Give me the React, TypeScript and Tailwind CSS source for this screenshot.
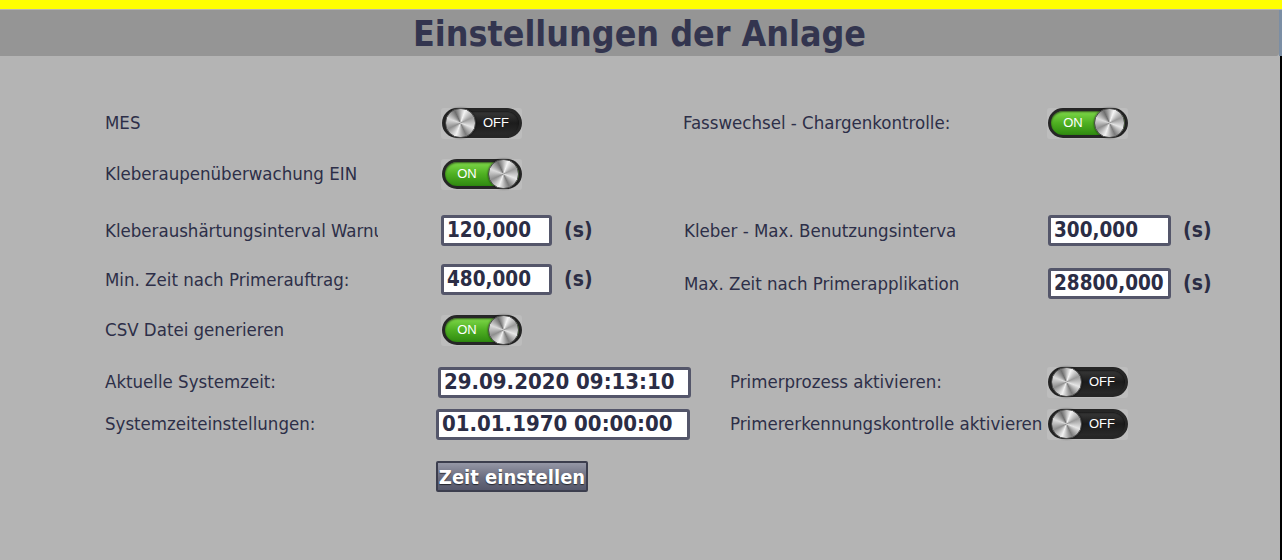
import React from 'react'

const font = { fontFamily: '"DejaVu Sans Condensed", "DejaVu Sans", sans-serif', fontStretch: 'condensed' as const }

function Toggle({ on }: { on: boolean }) {
  return (
    <div className="w-[81px] h-[31px] bg-[#bdbdbd] rounded-[3px] flex items-center justify-center shrink-0">
      <div
        className={`w-[80px] h-[30px] rounded-full border-[3px] border-[#262626] flex items-center justify-between shadow-[inset_0_1px_2px_rgba(0,0,0,0.6)] ${
          on
            ? 'bg-[linear-gradient(#7fd94a,#4fb022_50%,#2f8a10)]'
            : 'bg-[linear-gradient(#3a3a3a,#1c1c1c_50%,#2a2a2a)]'
        }`}
      >
        {on && <span className="flex-1 text-center text-[13px] text-white pl-[2px] -mt-[1px]" style={{ fontFamily: '"Liberation Sans", Arial, sans-serif' }}>ON</span>}
        <div className="w-[31px] h-[30px] -my-[2px] rounded-full border border-[#4a4a4a] bg-[conic-gradient(from_20deg,#f4f4f4,#9a9a9a,#e6e6e6,#7a7a7a,#f2f2f2,#8e8e8e,#dcdcdc,#6e6e6e,#f4f4f4)] shadow-[0_0_2px_rgba(0,0,0,0.7)] shrink-0" />
        {!on && <span className="flex-1 text-center text-[13px] text-white pr-[2px] -mt-[1px]" style={{ fontFamily: '"Liberation Sans", Arial, sans-serif' }}>OFF</span>}
      </div>
    </div>
  )
}

function Field({ value, w, size = 'text-[20.5px]' }: { value: string; w: string; size?: string }) {
  return (
    <div className={`${w} ${size} h-[31px] shrink-0 bg-white border-[3px] border-[#54566a] rounded-[3px] flex items-center pl-[3px] font-bold text-[#2b2d45] leading-none overflow-hidden whitespace-nowrap`}>
      {value}
    </div>
  )
}

// clip: the HMI label box cuts long texts at ~273px
function Label({ text, w = 'w-[336px]', clip = false }: { text: string; w?: string; clip?: boolean }) {
  return (
    <div className={`${w} shrink-0 text-[18.5px] text-[#2d2f48] whitespace-nowrap`}>
      <div className={clip ? 'max-w-[273px] overflow-hidden' : ''}>{text}</div>
    </div>
  )
}

function Unit() {
  return <span className="ml-[12px] text-[21px] font-bold text-[#2b2d45]">(s)</span>
}

export default function App() {
  return (
    <div className="w-[1282px] h-[560px] bg-[#b4b4b4] flex flex-col overflow-hidden" style={font}>
      <div className="h-[9px] bg-[#ffff00] shrink-0" />
      <div className="h-[1px] bg-[#b4b4b4] shrink-0" />
      <div className="flex shrink-0">
        <div className="w-[1279px] h-[46px] bg-[#959595] rounded-br-[3px] flex items-center justify-center">
          <h1 className="text-[35.5px] font-bold text-[#33354f] leading-none mt-[2px]">Einstellungen der Anlage</h1>
        </div>
        <div className="w-[3px] bg-[#7b8ea4]" />
      </div>

      <div className="flex flex-1">
        <div className="flex-1 pl-[105px] flex flex-col">
          {/* Row 1 */}
          <div className="mt-[52px] h-[30px] flex items-center">
            <div className="w-[578px] shrink-0 flex items-center">
              <Label text="MES" />
              <Toggle on={false} />
            </div>
            <div className="flex items-center">
              <Label text="Fasswechsel - Chargenkontrolle:" w="w-[364px]" />
              <Toggle on />
            </div>
          </div>

          {/* Row 2 */}
          <div className="mt-[20px] h-[32px] flex items-center">
            <div className="w-[578px] shrink-0 flex items-center">
              <Label text="Kleberaupenüberwachung EIN" />
              <Toggle on />
            </div>
          </div>

          {/* Row 3 */}
          <div className="mt-[25px] h-[31px] flex items-center">
            <div className="w-[578px] shrink-0 flex items-center">
              <Label text="Kleberaushärtungsinterval Warnung" clip />
              <Field value="120,000" w="w-[111px]" />
              <Unit />
            </div>
            <div className="flex items-center ml-[1px]">
              <Label text="Kleber - Max. Benutzungsintervall" w="w-[364px]" clip />
              <Field value="300,000" w="w-[123px]" />
              <Unit />
            </div>
          </div>

          {/* Row 4 */}
          <div className="mt-[18px] h-[35px] flex">
            <div className="w-[578px] shrink-0 flex items-start">
              <div className="h-[31px] flex items-center">
                <Label text="Min. Zeit nach Primerauftrag:" />
                <Field value="480,000" w="w-[111px]" />
                <Unit />
              </div>
            </div>
            <div className="flex items-end ml-[1px]">
              <div className="h-[31px] flex items-center">
                <Label text="Max. Zeit nach Primerapplikation" w="w-[364px]" />
                <Field value="28800,000" w="w-[123px]" />
                <Unit />
              </div>
            </div>
          </div>

          {/* Row 5 */}
          <div className="mt-[16px] h-[30px] flex items-center">
            <div className="w-[578px] shrink-0 flex items-center">
              <Label text="CSV Datei generieren" />
              <Toggle on />
            </div>
          </div>

          {/* Row 6 */}
          <div className="mt-[21px] h-[32px] flex items-center">
            <div className="w-[578px] shrink-0 flex items-center">
              <Label text="Aktuelle Systemzeit:" w="w-[333px]" />
              <Field value="29.09.2020 09:13:10" w="w-[253px]" size="text-[22px]" />
            </div>
            <div className="flex items-center -ml-[8px] pl-[55px]">
              <Label text="Primerprozess aktivieren:" w="w-[317px]" />
              <Toggle on={false} />
            </div>
          </div>

          {/* Row 7 */}
          <div className="mt-[10px] h-[32px] flex items-center">
            <div className="w-[578px] shrink-0 flex items-center">
              <Label text="Systemzeiteinstellungen:" w="w-[331px]" />
              <Field value="01.01.1970 00:00:00" w="w-[254px]" size="text-[22px]" />
            </div>
            <div className="flex items-center -ml-[9px] pl-[56px]">
              <Label text="Primererkennungskontrolle aktivieren" w="w-[317px]" />
              <Toggle on={false} />
            </div>
          </div>

          {/* Row 8 */}
          <div className="mt-[21px] h-[31px] flex items-center pl-[331px]">
            <button className="w-[152px] h-[31px] border-2 border-[#3c3e4e] rounded-[2px] bg-[linear-gradient(#9597a6,#6a6c7e_55%,#55576a)] text-white text-[20px] font-bold leading-none [text-shadow:0_1px_1px_rgba(0,0,0,0.6)]" style={font}>
              Zeit einstellen
            </button>
          </div>
        </div>
        <div className="w-[2px] bg-black" />
      </div>
    </div>
  )
}
